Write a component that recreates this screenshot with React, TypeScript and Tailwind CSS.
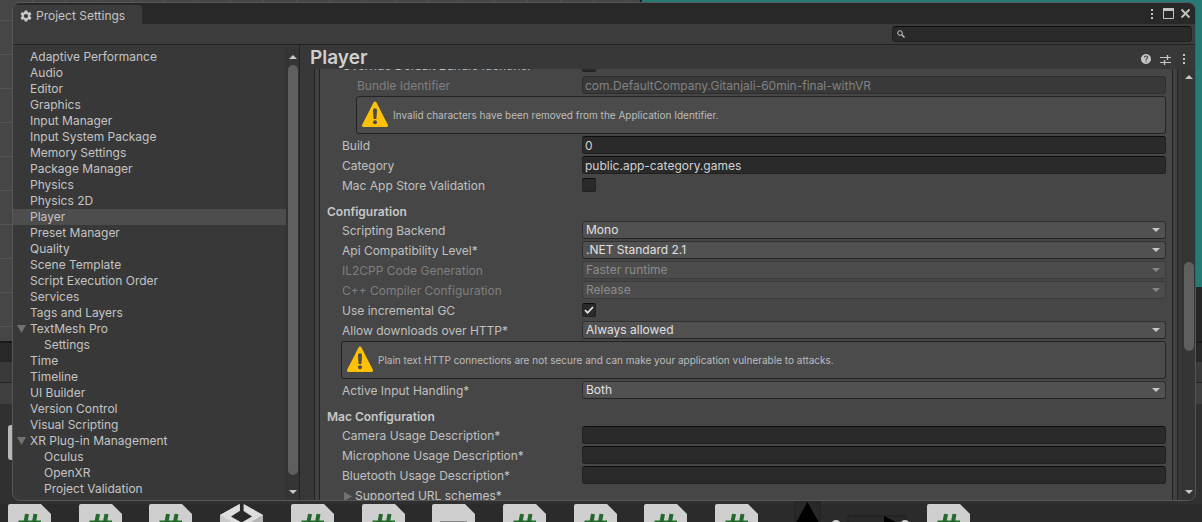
import React, { useId } from "react";
import { MdHelp, MdSettings } from "react-icons/md";

type TreeItem = { label: string; child?: boolean; open?: boolean };

const TREE: TreeItem[] = [
  { label: "Adaptive Performance" },
  { label: "Audio" },
  { label: "Editor" },
  { label: "Graphics" },
  { label: "Input Manager" },
  { label: "Input System Package" },
  { label: "Memory Settings" },
  { label: "Package Manager" },
  { label: "Physics" },
  { label: "Physics 2D" },
  { label: "Player" },
  { label: "Preset Manager" },
  { label: "Quality" },
  { label: "Scene Template" },
  { label: "Script Execution Order" },
  { label: "Services" },
  { label: "Tags and Layers" },
  { label: "TextMesh Pro", open: true },
  { label: "Settings", child: true },
  { label: "Time" },
  { label: "Timeline" },
  { label: "UI Builder" },
  { label: "Version Control" },
  { label: "Visual Scripting" },
  { label: "XR Plug-in Management", open: true },
  { label: "Oculus", child: true },
  { label: "OpenXR", child: true },
  { label: "Project Validation", child: true },
];

function Kebab() {
  return (
    <svg width="4" height="12" viewBox="0 0 4 12" fill="#c4c4c4" aria-hidden="true">
      <rect x="1" y="1" width="2" height="2" />
      <rect x="1" y="5" width="2" height="2" />
      <rect x="1" y="9" width="2" height="2" />
    </svg>
  );
}

function Arrow({ up = false, className = "" }: { up?: boolean; className?: string }) {
  return (
    <svg width="8" height="4" viewBox="0 0 8 4" fill="currentColor" className={className} aria-hidden="true">
      <path d={up ? "M0 4L4 0L8 4Z" : "M0 0H8L4 4Z"} />
    </svg>
  );
}

function ScrollBar({ children, label }: { children: React.ReactNode; label: string }) {
  return (
    <div className="flex w-[13px] shrink-0 flex-col items-center border-l border-[#303030] bg-[#353535] text-[#c8c8c8]">
      <button aria-label={`Scroll ${label} up`} className="flex h-4 w-full shrink-0 items-center justify-center">
        <Arrow up />
      </button>
      <div className="flex w-[10px] grow flex-col">{children}</div>
      <button aria-label={`Scroll ${label} down`} className="flex h-4 w-full shrink-0 items-center justify-center">
        <Arrow />
      </button>
    </div>
  );
}

type RowProps = { label: string; disabled?: boolean; nested?: boolean };

function Row({ label, disabled, nested, id, children }: RowProps & { id: string; children: React.ReactNode }) {
  return (
    <div className="flex h-[18px] shrink-0 items-center pl-[15px]">
      <label
        htmlFor={id}
        className={`w-[240px] shrink-0 pt-[2px] leading-4 whitespace-nowrap ${nested ? "pl-[15px]" : ""} ${disabled ? "text-[#7f7f7f]" : "text-[#c0c0c0]"}`}
      >
        {label}
      </label>
      {children}
    </div>
  );
}

function TextRow({ value = "", ...row }: RowProps & { value?: string }) {
  const id = useId();
  return (
    <Row {...row} id={id}>
      <input
        id={id}
        type="text"
        defaultValue={value}
        disabled={row.disabled}
        className="h-[18px] min-w-0 grow rounded-[3px] border border-[#212121] border-t-[#0d0d0d] bg-[#2a2a2a] px-[2px] pt-px text-[#d2d2d2] outline-none disabled:border-[#2e2e2e] disabled:bg-[#393939] disabled:text-[#828282]"
      />
    </Row>
  );
}

function SelectRow({ value, ...row }: RowProps & { value: string }) {
  const id = useId();
  return (
    <Row {...row} id={id}>
      <div className="relative flex h-[18px] min-w-0 grow">
        <select
          id={id}
          disabled={row.disabled}
          className="h-[18px] w-full appearance-none rounded-[3px] border border-[#303030] border-b-[#242424] bg-[#515151] px-[3px] leading-4 text-[#e0e0e0] opacity-100 outline-none disabled:border-[#3c3c3c] disabled:bg-[#4c4c4c] disabled:text-[#8b8b8b]"
        >
          <option>{value}</option>
        </select>
        <Arrow
          className={`pointer-events-none absolute top-[7px] right-[6px] ${row.disabled ? "text-[#858585]" : "text-[#c8c8c8]"}`}
        />
      </div>
    </Row>
  );
}

function CheckRow({ checked = false, ...row }: RowProps & { checked?: boolean }) {
  const id = useId();
  return (
    <Row {...row} id={id}>
      <div className="relative h-[14px] w-[14px]">
        <input
          id={id}
          type="checkbox"
          defaultChecked={checked}
          className="peer block h-[14px] w-[14px] appearance-none rounded-[2px] border border-[#212121] border-t-[#0d0d0d] bg-[#2a2a2a]"
        />
        <svg
          viewBox="0 0 14 14"
          className="pointer-events-none absolute inset-0 hidden h-[14px] w-[14px] peer-checked:block"
          fill="none"
          stroke="#e4e4e4"
          strokeWidth="1.8"
          aria-hidden="true"
        >
          <path d="M3 7.2L5.6 9.8L11 4" />
        </svg>
      </div>
    </Row>
  );
}

function Warning({ text, nested }: { text: string; nested?: boolean }) {
  return (
    <div className={`shrink-0 ${nested ? "pl-[29px]" : "pl-[14px]"}`}>
      <div role="alert" className="flex h-[38px] items-center gap-1 rounded-[3px] border border-[#232323] bg-[#4b4b4b] pl-1">
        <svg width="28" height="28" viewBox="0 0 28 28" className="shrink-0" aria-hidden="true">
          <path d="M14 2L25.500 24.500H2.500Z" fill="#ffc107" stroke="#ffc107" strokeWidth="3" strokeLinejoin="round" />
          <path d="M12 9.200Q12 7.200 14 7.200Q16 7.200 16 9.200L15.400 18H12.600Z" fill="#4b4b4b" />
          <circle cx="14" cy="21.300" r="2" fill="#4b4b4b" />
        </svg>
        <p className="truncate text-[10px] leading-[14px] text-[#bdbdbd]">{text}</p>
      </div>
    </div>
  );
}

function Heading({ children }: { children: React.ReactNode }) {
  return <h2 className="h-[23px] shrink-0 pt-2 leading-4 font-semibold text-[#c8c8c8]">{children}</h2>;
}

function ScriptIcon() {
  return (
    <svg width="43" height="52" viewBox="0 0 43 52" aria-hidden="true">
      <path d="M2 0H33L43 10V50Q43 52 41 52H2Q0 52 0 50V2Q0 0 2 0Z" fill="#cfcfcf" />
      <path d="M19 10L14.500 34M27.500 10L23 34M10.500 18.500H33M9 26H31" stroke="#23682c" strokeWidth="4" fill="none" />
    </svg>
  );
}

function TextIcon() {
  return (
    <svg width="43" height="52" viewBox="0 0 43 52" aria-hidden="true">
      <path d="M2 0H33L43 10V50Q43 52 41 52H2Q0 52 0 50V2Q0 0 2 0Z" fill="#cfcfcf" />
      <path d="M8 18H35M8 25H35" stroke="#868686" strokeWidth="2" />
    </svg>
  );
}

function UnityIcon() {
  return (
    <svg width="43" height="52" viewBox="0 0 43 52" aria-hidden="true">
      <path d="M20 0L0 11V36L21.500 48V24Z" fill="#cacaca" />
      <path d="M23.500 0L43 11V36L21.500 48V24Z" fill="#b5b5b5" />
      <path d="M19.500 0L0 11L21.500 23.500L43 11L23.500 0V6L32 12.500L21.500 18.500L11 12.500L19.500 6Z" fill="#dedede" />
      <path d="M21.500 6L32 12.500L21.500 18.500L11 12.500Z" fill="#292929" />
      <path d="M20 0H23.500V8H20Z" fill="#292929" />
    </svg>
  );
}

function PrefabIcon() {
  return (
    <svg width="50" height="52" viewBox="-8 0 50 52" overflow="visible" aria-hidden="true">
      <rect x="1" y="-2" width="25" height="40" fill="#292929" stroke="#222222" />
      <path d="M13.500 -2L28 24H-1Z" fill="#000000" />
      <circle cx="42" cy="21" r="5" fill="#cfcfcf" />
    </svg>
  );
}

function ArrowAssetIcon() {
  return (
    <svg width="60" height="52" viewBox="-8 0 60 52" overflow="visible" aria-hidden="true">
      <rect x="-16" y="12" width="58" height="30" fill="#292929" stroke="#1f1f1f" />
      <path d="M20 12L44 24L20 36Z" fill="#000000" />
      <circle cx="41" cy="21" r="5" fill="#cfcfcf" />
    </svg>
  );
}

const ASSETS = [
  ScriptIcon, ScriptIcon, ScriptIcon, UnityIcon, ScriptIcon, ScriptIcon, TextIcon,
  ScriptIcon, ScriptIcon, ScriptIcon, ScriptIcon, PrefabIcon, ArrowAssetIcon, ScriptIcon,
];

function EditorBackdrop() {
  return (
    <div className="col-start-1 row-start-1 flex min-h-0 flex-col overflow-hidden" aria-hidden="true">
      <div className="flex h-[341px] shrink-0">
        <svg className="h-full w-[53.25%]">
          <defs>
            <pattern id="sceneGrid" width="33" height="34" patternUnits="userSpaceOnUse" y="20">
              <rect width="33" height="34" fill="#464646" />
              <path d="M0 .5H33M32.500 0V34" stroke="#535353" />
            </pattern>
          </defs>
          <rect width="100%" height="100%" fill="url(#sceneGrid)" />
        </svg>
        <div className="flex grow flex-col border-l-2 border-[#1c1c1c] bg-[#262626]">
          <div className="h-[287px] bg-[#267b76]" />
        </div>
      </div>
      <div className="h-[21px] shrink-0 border-t-2 border-[#191919] bg-[#282828]" />
      <div className="h-[21px] shrink-0 border-b border-[#232323] bg-[#3a3a3a]" />
      <div className="h-[21px] shrink-0 bg-[#404040]" />
      <div className="h-[100px] shrink-0 bg-[#303030] pt-[21px]">
        <div className="ml-2 h-[35px] w-6 rounded-[3px] bg-[#b8b8b8]" />
      </div>
      <div className="grid grow grid-cols-17 bg-[#2b2b2b]">
        {ASSETS.map((Icon, i) => (
          <div key={i} className="min-w-0 pl-2">
            <Icon />
          </div>
        ))}
      </div>
    </div>
  );
}

export default function App() {
  return (
    <main className="grid h-screen grid-cols-[minmax(0,1fr)] grid-rows-[minmax(0,1fr)] overflow-hidden bg-[#2b2b2b] font-['Inter',sans-serif] text-[12px] text-[#c4c4c4]">
      <EditorBackdrop />
      <section
        aria-label="Project Settings"
        className="z-10 col-start-1 row-start-1 mt-[2px] mr-[6px] mb-[21px] ml-3 flex min-h-0 flex-col overflow-hidden rounded-[8px] border border-[#575757] bg-[#383838]"
      >
        <header className="flex h-[21px] shrink-0 items-end justify-between bg-[#282828]">
          <div className="flex h-[19px] w-[129px] items-center gap-[3px] rounded-tr-[3px] bg-[#3c3c3c] pt-[2px] pl-[6px]">
            <MdSettings className="h-[14px] w-[14px] text-[#c8c8c8]" aria-hidden="true" />
            <h1 className="leading-[18px] whitespace-nowrap">Project Settings</h1>
          </div>
          <div className="flex h-full items-center gap-[6px] pr-1">
            <button aria-label="Window menu" className="flex w-[10px] justify-center"><Kebab /></button>
            <button aria-label="Maximize">
              <svg width="11" height="11" viewBox="0 0 11 11" aria-hidden="true">
                <path d="M.5 .5H10.500V10.500H.5Z" fill="none" stroke="#c4c4c4" />
                <path d="M0 0H11V3H0Z" fill="#c4c4c4" />
              </svg>
            </button>
            <button aria-label="Close">
              <svg width="11" height="11" viewBox="0 0 11 11" stroke="#c4c4c4" strokeWidth="1.800" aria-hidden="true">
                <path d="M1.500 1.500L9.500 9.500M9.500 1.500L1.500 9.500" />
              </svg>
            </button>
          </div>
        </header>

        <div className="flex h-[21px] shrink-0 items-center justify-end border-b border-[#232323] bg-[#3c3c3c] pr-[3px]">
          <label className="flex h-4 w-[300px] items-center gap-1 rounded-[4px] border border-[#212121] border-t-[#0d0d0d] bg-[#2a2a2a] pl-1">
            <svg width="8" height="8" viewBox="0 0 8 8" fill="none" stroke="#c4c4c4" aria-hidden="true">
              <circle cx="3" cy="3" r="2.300" />
              <path d="M4.800 4.800L7.500 7.500" strokeWidth="1.300" />
            </svg>
            <input type="text" aria-label="Search settings" className="h-[14px] min-w-0 grow bg-transparent outline-none" />
          </label>
        </div>

        <div className="flex min-h-0 grow">
          <nav aria-label="Settings" className="flex w-[287px] shrink-0 border-r border-[#222222] pt-1">
            <ul className="min-w-0 grow">
              {TREE.map((item) => (
                <li key={item.label}>
                  <button
                    className={`flex h-4 w-full items-center text-left leading-4 ${item.child ? "pl-[31px]" : item.open ? "gap-1 pl-1" : "pl-[17px]"} ${item.label === "Player" ? "bg-[#4d4d4d]" : ""}`}
                  >
                    {item.open && (
                      <svg width="9" height="8" viewBox="0 0 9 8" fill="#727272" aria-hidden="true">
                        <path d="M0 0H9L4.500 8Z" />
                      </svg>
                    )}
                    {item.label}
                  </button>
                </li>
              ))}
            </ul>
            <ScrollBar label="settings list">
              <div className="grow-[410] rounded-full bg-[#5f5f5f]" />
              <div className="grow-[9]" />
            </ScrollBar>
          </nav>

          <div className="flex min-w-0 grow flex-col">
            <div className="flex h-6 shrink-0 items-center justify-between pr-[9px] pl-[10px]">
              <h2 className="pt-[2px] text-[19px] leading-[22px] font-semibold text-[#d0d0d0]">Player</h2>
              <div className="flex items-center gap-2 pt-1">
                <button aria-label="Help"><MdHelp className="h-3 w-3 text-[#c4c4c4]" /></button>
                <button aria-label="Presets">
                  <svg width="11" height="11" viewBox="0 0 11 11" stroke="#c4c4c4" fill="none" aria-hidden="true">
                    <path d="M0 3.500H6M9 3.500H11M0 8.500H2M5 8.500H11" />
                    <path d="M7.500 1V6M4.500 6V11" strokeWidth="1.400" />
                    <path d="M6 3.500H10M2 8.500H5" />
                  </svg>
                </button>
                <button aria-label="More options" className="flex w-[7px] justify-end"><Kebab /></button>
              </div>
            </div>

            <div className="flex min-h-0 grow">
              <div className="ml-[14px] flex min-w-0 grow overflow-hidden border-x border-[#232323] bg-[#414141] px-1">
                <form className="-mt-[13px] flex min-w-0 grow flex-col gap-[2px] border-x border-[#232323] bg-[#464646] pr-[6px] pl-[7px]">
                  <CheckRow label="Override Default Bundle Identifier" />
                  <TextRow label="Bundle Identifier" value="com.DefaultCompany.Gitanjali-60min-final-withVR" disabled nested />
                  <Warning text="Invalid characters have been removed from the Application Identifier." nested />
                  <TextRow label="Build" value="0" />
                  <TextRow label="Category" value="public.app-category.games" />
                  <CheckRow label="Mac App Store Validation" />
                  <Heading>Configuration</Heading>
                  <SelectRow label="Scripting Backend" value="Mono" />
                  <SelectRow label="Api Compatibility Level*" value=".NET Standard 2.1" />
                  <SelectRow label="IL2CPP Code Generation" value="Faster runtime" disabled />
                  <SelectRow label="C++ Compiler Configuration" value="Release" disabled />
                  <CheckRow label="Use incremental GC" checked />
                  <SelectRow label="Allow downloads over HTTP*" value="Always allowed" />
                  <Warning text="Plain text HTTP connections are not secure and can make your application vulnerable to attacks." />
                  <SelectRow label="Active Input Handling*" value="Both" />
                  <Heading>Mac Configuration</Heading>
                  <TextRow label="Camera Usage Description*" />
                  <TextRow label="Microphone Usage Description*" />
                  <TextRow label="Bluetooth Usage Description*" />
                  <button type="button" className="flex h-[18px] shrink-0 items-center gap-[3px] pt-[2px] pl-[17px] leading-4 text-[#c4c4c4]">
                    <svg width="8" height="9" viewBox="0 0 8 9" fill="#727272" aria-hidden="true">
                      <path d="M0 0L8 4.500L0 9Z" />
                    </svg>
                    Supported URL schemes*
                  </button>
                </form>
              </div>
              <div className="ml-1 flex">
                <ScrollBar label="player settings">
                  <div className="grow-[178]" />
                  <div className="grow-[89] rounded-full bg-[#5f5f5f]" />
                  <div className="grow-[134]" />
                </ScrollBar>
              </div>
            </div>
          </div>
        </div>
      </section>
    </main>
  );
}
